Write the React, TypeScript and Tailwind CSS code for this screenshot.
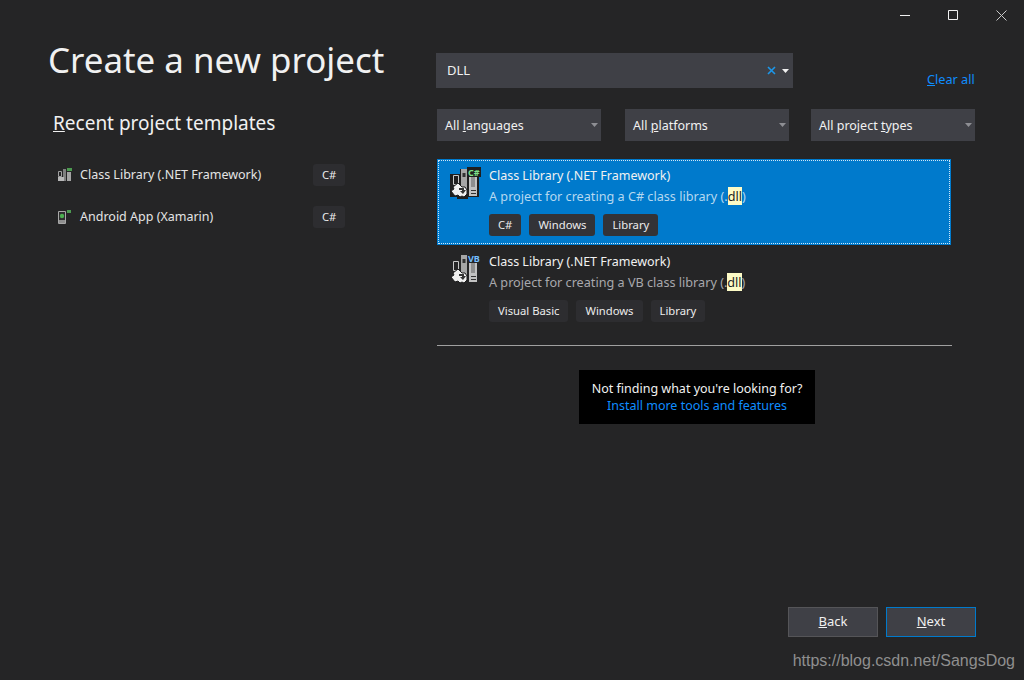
import { ReactNode } from "react";

const font = "font-['Noto_Sans','Open_Sans',sans-serif]";

function Caret({ className }: { className: string }) {
  return (
    <svg width="7" height="4" viewBox="0 0 7 4" className={className}>
      <path d="M0 0h7L3.5 4z" fill="currentColor" />
    </svg>
  );
}

function Filter({ width, children }: { width: string; children: ReactNode }) {
  return (
    <div className={`${width} h-8 bg-[#3f4046] flex items-center justify-between pl-2 pr-[3px] text-[12.5px] text-[#f1f1f1]`}>
      <span className="pt-[2px]">{children}</span>
      <Caret className="text-[#8e8f94]" />
    </div>
  );
}

function Chip({ label, dark }: { label: string; dark?: boolean }) {
  return (
    <span
      className={`h-[22px] px-[9px] rounded-[3px] flex items-center text-[11.25px] text-[#ececec] ${
        dark ? "bg-[#333337]" : "bg-[#2d2d30]"
      }`}
    >
      {label}
    </span>
  );
}

function LibraryIcon({ lang, selected }: { lang: string; selected?: boolean }) {
  const isCs = lang === "C#";
  return (
    <svg width="31" height="32" viewBox="0 0 31 32" className="shrink-0 mt-[2px]">
      {selected && <path d="M0 7h10V2h7V0h14v10h-2v20H18v2H7v-2H0z" fill="#1e1e1e" />}
      {/* left book */}
      <path d="M3.5 8.5h5v9h-5z" fill="none" stroke="#c8c8c8" />
      {/* middle book */}
      <path d="M11 2h6v26h-6z" fill="#a6a6a6" />
      <path d="M12.5 6h3v4h-3z" fill="#333" />
      {/* right book */}
      <path d="M19 10h8v19h-8z" fill="#c2c2c2" />
      <path d="M21 10h4v10h-4z" fill="#8f8f8f" />
      <path d="M21 23h5v1h-5zM21 26h5v1h-5z" fill="#333" />
      {/* gear */}
      <path d="M8 16l4 4h3l2 3v4l-3 3-2-1-2 1-2-2-3 1-4-5 3-2-1-2z" fill="#f0f0f0" stroke="#1e1e1e" />
      <path d="M9 21h5v2h2l-3 4-3-3h2v-1h-3z" fill="#333" />
      {!selected && <path d="M18 0h13v9H18z" fill="#252526" />}
      <text x="18" y="8.5" fontSize="9" fontWeight="700" fill={isCs ? "#7fe08a" : "#75beff"} fontFamily="Noto Sans">
        {isCs ? "C#" : "VB"}
      </text>
    </svg>
  );
}

function SmallIcon({ android }: { android?: boolean }) {
  return (
    <svg width="16" height="16" viewBox="0 0 16 16" className="shrink-0">
      {android ? (
        <>
          <path d="M1.5 2.5h7v12h-7z" fill="#2e2e2e" stroke="#a8a8a8" />
          <circle cx="5" cy="7" r="2.2" fill="#4cb050" />
          <path d="M2 11h6v3H2z" fill="#8f8f8f" />
          <path d="M10 1h4v3h-4z" fill="#4c9a50" />
        </>
      ) : (
        <>
          <path d="M1.5 4.5h3v5h-3z" fill="none" stroke="#a0a0a0" />
          <path d="M6 2h3v12H6z" fill="#808080" />
          <path d="M10 5h4v9h-4z" fill="#a4a4a4" />
          <path d="M1 10h6v4H1z" fill="#b8b8b8" />
          <path d="M10 1h5v3h-5z" fill="#4c9a50" />
        </>
      )}
    </svg>
  );
}

function RecentRow({ name, android }: { name: string; android?: boolean }) {
  return (
    <div className="h-[42px] flex items-center">
      <div className="w-[23px]">
        <SmallIcon android={android} />
      </div>
      <span className="w-[233px] text-[12.5px] text-[#e4e4e4]">{name}</span>
      <Chip label="C#" />
    </div>
  );
}

function TemplateRow({ lang, chips, selected }: { lang: string; chips: string[]; selected?: boolean }) {
  return (
    <div className={`h-[86px] relative flex gap-2 pl-[13px] pt-[6px] ${selected ? "bg-[#007acc]" : ""}`}>
      {selected && <div className="absolute inset-[1px] border border-dotted border-[#cfe6f7]" />}
      <LibraryIcon lang={lang} selected={selected} />
      <div className="flex flex-col pt-[2px]">
        <div className="text-[12.5px] leading-[18px] text-[#f1f1f1]">Class Library (.NET Framework)</div>
        <div className={`mt-[2px] text-[12.65px] leading-[18px] ${selected ? "text-[#b5d8f0]" : "text-[#a8a8ac]"}`}>
          A project for creating a {lang} class library (.
          <span className="bg-[#fdfbc6] text-[#1e1e1e]">dll</span>)
        </div>
        <div className="mt-[9px] flex gap-2">
          {chips.map((c) => (
            <Chip key={c} label={c} dark={selected} />
          ))}
        </div>
      </div>
    </div>
  );
}

export default function App() {
  return (
    <div className={`${font} relative w-[1024px] h-[680px] bg-[#252526] flex flex-col overflow-hidden`}>
      <div className="h-[30px] flex justify-end items-center pr-[17px] gap-[38px] text-[#f1f1f1]">
        <svg width="10" height="10" viewBox="0 0 10 10">
          <path d="M0 5.5h10" stroke="currentColor" />
        </svg>
        <svg width="10" height="10" viewBox="0 0 10 10">
          <path d="M.5.5h9v9h-9z" fill="none" stroke="currentColor" />
        </svg>
        <svg width="11" height="11" viewBox="0 0 11 11">
          <path d="M.5.5l10 10M10.5.5l-10 10" stroke="#c8c8c8" />
        </svg>
      </div>

      <div className="flex flex-1">
        <div className="w-[436px] shrink-0 pl-[48px]">
          <h1 className="text-[34.9px] leading-[44px] mt-[8px] text-[#f1f1f1]">Create a new project</h1>
          <h2 className="mt-[27px] ml-[5px] text-[19px] leading-[28px] text-[#f1f1f1]">
            <u>R</u>ecent project templates
          </h2>
          <div className="mt-[17px] ml-[9px]">
            <RecentRow name="Class Library (.NET Framework)" />
            <RecentRow name="Android App (Xamarin)" android />
          </div>
        </div>

        <div className="flex-1 flex flex-col">
          <div className="mt-[23px] flex items-end">
            <div className="w-[357px] h-[35px] bg-[#3f4046] flex items-center justify-between pl-[11px] pr-[4px] text-[13px] text-[#f1f1f1]">
              <span>DLL</span>
              <span className="flex items-center gap-[6px]">
                <svg width="9" height="9" viewBox="0 0 9 9">
                  <path d="M1 1l7 7M8 1L1 8" stroke="#1c97ea" strokeWidth="1.6" />
                </svg>
                <Caret className="text-[#f1f1f1]" />
              </span>
            </div>
            <a className="ml-[134px] text-[12.7px] leading-[18px] text-[#0f8dff]">
              <u>C</u>lear all
            </a>
          </div>

          <div className="mt-[21px] ml-px flex">
            <Filter width="w-[164px]">
              All <u>l</u>anguages
            </Filter>
            <div className="w-[24px]" />
            <Filter width="w-[164px]">
              All <u>p</u>latforms
            </Filter>
            <div className="w-[22px]" />
            <Filter width="w-[164px]">
              All project <u>t</u>ypes
            </Filter>
          </div>

          <div className="mt-[18px] ml-px w-[514px]">
            <TemplateRow lang="C#" chips={["C#", "Windows", "Library"]} selected />
            <TemplateRow lang="VB" chips={["Visual Basic", "Windows", "Library"]} />
          </div>

          <div className="mt-[14px] ml-px w-[515px] h-px bg-[#a0a0a0]" />

          <div className="mt-[24px] ml-[143px] w-[236px] h-[54px] bg-black flex flex-col items-center justify-center text-[12.5px] leading-[17px]">
            <span className="text-[#f1f1f1]">Not finding what you're looking for?</span>
            <a className="text-[#0f8dff]">Install more tools and features</a>
          </div>
        </div>
      </div>

      <div className="h-[73px] flex justify-end gap-2 pr-[48px]">
        <button className="w-[90px] h-[30px] bg-[#3f4046] border border-[#555558] text-[13px] text-[#f1f1f1]">
          <u>B</u>ack
        </button>
        <button className="w-[90px] h-[30px] bg-[#3f4046] border border-[#007acc] text-[13px] text-[#f1f1f1]">
          <u>N</u>ext
        </button>
      </div>

      <div className="absolute right-[9px] bottom-[9px] font-['Liberation_Sans',sans-serif] text-base leading-[20px] text-[#8f8f8f]">
        https://blog.csdn.net/SangsDog
      </div>
    </div>
  );
}
